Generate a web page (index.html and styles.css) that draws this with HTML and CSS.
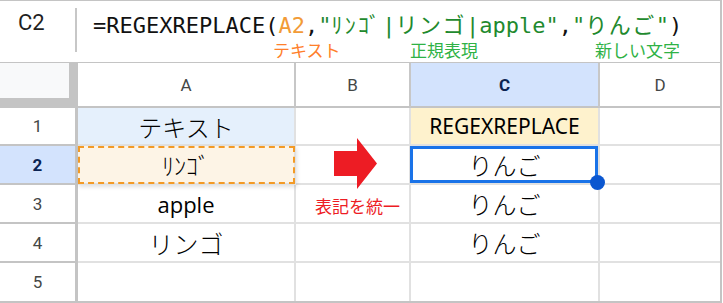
FILE: index.html
```html
<!DOCTYPE html>
<html lang="ja">
<head>
<meta charset="utf-8">
<link rel="stylesheet" href="styles.css">
</head>
<body>
<div class="frame">
  <div class="fbar">
    <div class="namebox">C2</div>
    <div class="sep"></div>
    <div class="formula"><span class="k">=REGEXREPLACE(</span><span class="ref">A2</span><span class="k">,</span><span class="str">"<span class="hw">ﾘﾝｺﾞ</span>|<span class="fw">リンゴ</span>|apple"</span><span class="k">,</span><span class="str">"<span class="fw">りんご</span>"</span><span class="k">)</span><span class="note note-o n1">テキスト</span><span class="note note-g n2">正規表現</span><span class="note note-g n3">新しい文字</span></div>
  </div>
  <div class="sheet">
    <div class="corner"><div class="corner-in"></div></div>
    <div class="ch">A</div>
    <div class="ch">B</div>
    <div class="ch ch-sel">C</div>
    <div class="ch ch-last">D</div>

    <div class="rh">1</div>
    <div class="c c-blue jp">テキスト</div>
    <div class="c"></div>
    <div class="c c-yellow lat">REGEXREPLACE</div>
    <div class="c c-last"></div>

    <div class="rh rh-sel">2</div>
    <div class="c c-cream c-dash jp">ﾘﾝｺﾞ</div>
    <div class="c"></div>
    <div class="c c-active jp">りんご</div>
    <div class="c c-last"></div>

    <div class="rh">3</div>
    <div class="c lat apple">apple</div>
    <div class="c note-red">表記を統一</div>
    <div class="c jp">りんご</div>
    <div class="c c-last"></div>

    <div class="rh">4</div>
    <div class="c jp big">リンゴ</div>
    <div class="c"></div>
    <div class="c jp">りんご</div>
    <div class="c c-last"></div>

    <div class="rh rh-end">5</div>
    <div class="c c-end"></div>
    <div class="c c-end"></div>
    <div class="c c-end"></div>
    <div class="c c-last c-end"></div>
  </div>
  <svg class="arrow" width="723" height="303" viewBox="0 0 723 303">
    <polygon points="334,151 357,151 357,138 377,163.5 357,189 357,176 334,176" fill="#ed1c24"/>
  </svg>
</div>
</body>
</html>
```

FILE: styles.css
```css
* { box-sizing: border-box; }
html, body { margin: 0; padding: 0; background: #fff; }
body { width: 723px; height: 303px; overflow: hidden; font-family: Roboto, "Noto Sans", "Noto Sans CJK JP", sans-serif; }

.frame {
  position: relative;
  width: 722px;
  height: 303px;
  border-top: 1px solid #c4c4c4;
  border-right: 2px solid #c4c4c4;
  border-bottom: 2px solid #c4c4c4;
}

.fbar {
  display: flex;
  height: 62px;
  border-bottom: 1px solid #c4c4c4;
}
.namebox {
  flex: none;
  width: 75px;
  padding-left: 18px;
  padding-top: 7px;
  font-family: Roboto, "Noto Sans", sans-serif;
  font-size: 22px;
  line-height: 30px;
  color: #1f1f1f;
}
.sep {
  flex: none;
  width: 2px;
  height: 44px;
  margin-top: 7px;
  background: #c7c7c7;
}
.formula {
  position: relative;
  flex: none;
  margin-left: 16px;
  padding-top: 7px;
  font-family: "DejaVu Sans Mono", "Noto Sans CJK JP", monospace;
  font-size: 22px;
  line-height: 30px;
  white-space: nowrap;
  color: #111;
}
.ref { color: #f29b37; }
.str { color: #1f8a2e; }
.fw { font-family: "Noto Sans CJK JP", sans-serif; font-size: 22px; letter-spacing: 1.5px; }
.hw { font-family: "Noto Sans CJK JP", sans-serif; letter-spacing: 2.3px; }
.note {
  position: absolute;
  top: 39px;
  font-family: "Noto Sans CJK JP", sans-serif;
  font-size: 17px;
  line-height: 20px;
  white-space: nowrap;
}
.note-o { color: #ff7f2a; }
.note-g { color: #2fb246; }
.n1 { left: 180px; }
.n2 { left: 317px; }
.n3 { left: 502px; }

.sheet {
  display: grid;
  grid-template-columns: 78px 218px 115px 189px 120px;
  grid-template-rows: 45px 38px 39px 39px 39px 38px;
}
.corner {
  background: #c4c4c4;
}
.corner-in {
  width: 69px;
  height: 35px;
  background: #f8f9fa;
}
.ch {
  display: flex;
  align-items: center;
  justify-content: center;
  border-right: 2px solid #c7c7c7;
  border-bottom: 2px solid #c4c4c4;
  font-size: 17px;
  color: #444746;
}
.ch-sel { background: #d3e3fd; color: #0b2352; font-weight: 700; }
.ch-last { border-right: none; }
.rh {
  display: flex;
  align-items: center;
  justify-content: center;
  border-right: 3px solid #c4c4c4;
  border-bottom: 2px solid #c4c4c4;
  font-size: 17px;
  color: #444746;
}
.rh-sel { background: #d3e3fd; color: #0b2352; font-weight: 700; }
.rh-end { border-bottom: none; }
.c {
  position: relative;
  display: flex;
  align-items: center;
  justify-content: center;
  border-right: 2px solid #e1e1e1;
  border-bottom: 2px solid #e1e1e1;
  color: #000;
}
.c-last { border-right: none; }
.c-end { border-bottom: none; }
.jp { font-family: "Noto Sans CJK JP", sans-serif; font-size: 24px; font-weight: 300; }
.big { font-size: 25px; }
.lat { font-family: "Noto Sans", "Noto Sans CJK JP", sans-serif; font-size: 21px; }
.apple { font-family: "Open Sans", "Noto Sans", sans-serif; font-size: 22px; }
.c-blue { background: #e5f0fc; }
.c-yellow { background: #fef2cd; }
.c-cream { background: #fdf4e6; box-shadow: 1px 2px 4px rgba(0,0,0,0.12); z-index: 1; }
.c-dash::after {
  content: "";
  position: absolute;
  top: 0; left: 0; right: -1px; bottom: -1px;
  border: 2px dashed #f39a25;
}
.c-active::after {
  content: "";
  position: absolute;
  top: 0; left: -1px; right: 0; bottom: 0;
  border: 3px solid #1a73e8;
  z-index: 2;
}
.c-active::before {
  content: "";
  position: absolute;
  width: 15px; height: 15px;
  right: -7px; bottom: -7px;
  border-radius: 50%;
  background: #0b57d0;
  z-index: 3;
}
.note-red {
  font-family: "Noto Sans CJK JP", sans-serif;
  font-size: 17px;
  color: #ed1c24;
  padding-left: 10px;
  padding-top: 3px;
}
.arrow {
  position: absolute;
  left: 0; top: -1px;
  pointer-events: none;
  z-index: 4;
}
```
